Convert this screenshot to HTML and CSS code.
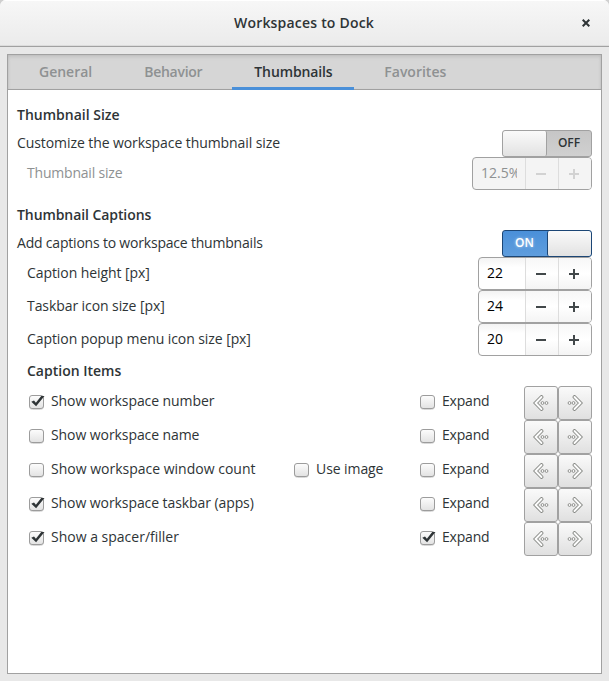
FILE: index.html
```html
<!DOCTYPE html>
<html lang="en">
<head>
<meta charset="utf-8">
<title>Workspaces to Dock</title>
<link rel="stylesheet" href="styles.css">
</head>
<body>
<svg width="0" height="0" class="defs">
  <defs>
    <linearGradient id="box" x1="0" y1="0" x2="0" y2="1"><stop offset="0" stop-color="#fdfdfd"/><stop offset="1" stop-color="#e2e2e2"/></linearGradient>
    <symbol id="check" viewBox="0 0 17 17">
      <rect x="1.500" y="2.500" width="14" height="13" rx="3" fill="none" stroke="#d8d8d8"/>
      <rect x="1.500" y="1.500" width="14" height="13" rx="2.500" fill="url(#box)" stroke="#9c9c9c"/>
    </symbol>
    <symbol id="tick" viewBox="0 0 17 17">
      <path d="M3.300 7.800l2.700-1.200 1.900 2.100L13.200 2h3.300L8.100 12.200z" fill="#2e3436"/>
    </symbol>
    <symbol id="arrow" viewBox="0 0 16 16">
      <path d="M8.500 2L2.600 8l5.900 6" fill="none" stroke="#848682" stroke-width="3.800" stroke-linecap="round"/>
      <path d="M8.500 2L2.600 8l5.900 6" fill="none" stroke="#fcfcfc" stroke-width="2" stroke-linecap="round"/>
      <circle cx="9.500" cy="8" r="1.400" fill="#fff" stroke="#848682" stroke-width=".9"/>
      <circle cx="13.500" cy="8" r="1.400" fill="#fff" stroke="#848682" stroke-width=".9"/>
    </symbol>
    <symbol id="minus" viewBox="0 0 10 10"><path d="M0 5h10" stroke="currentColor" stroke-width="2"/></symbol>
    <symbol id="plus" viewBox="0 0 10 10"><path d="M0 5h10M5 0v10" stroke="currentColor" stroke-width="2"/></symbol>
  </defs>
</svg>
<div class="window">
  <header class="titlebar">
    <h1>Workspaces to Dock</h1>
    <svg class="close" width="8" height="8" viewBox="0 0 8 8"><path d="M.7.7l6.600 6.600M7.300.7L.7 7.300" stroke="#2e3436" stroke-width="2"/></svg>
  </header>
  <main class="notebook">
    <nav class="tabs">
      <div class="tab">General</div>
      <div class="tab behavior">Behavior</div>
      <div class="tab active">Thumbnails</div>
      <div class="tab">Favorites</div>
    </nav>
    <section class="page">
      <h2>Thumbnail Size</h2>
      <div class="row row-switch"><span class="label tight">Customize the workspace thumbnail size</span><div class="switch"><i></i><b>OFF</b></div></div>
      <div class="row row-spin disabled"><span class="label tighter">Thumbnail size</span><div class="spin wide"><span class="value">12.5%</span><span class="step"><svg><use href="#minus"/></svg></span><span class="step"><svg><use href="#plus"/></svg></span></div></div>
      <h2 class="second tight">Thumbnail Captions</h2>
      <div class="row row-switch"><span class="label tighter">Add captions to workspace thumbnails</span><div class="switch on"><b>ON</b><i></i></div></div>
      <div class="row row-spin"><span class="label tight">Caption height [px]</span><div class="spin"><span class="value">22</span><span class="step"><svg><use href="#minus"/></svg></span><span class="step"><svg><use href="#plus"/></svg></span></div></div>
      <div class="row row-spin"><span class="label tight">Taskbar icon size [px]</span><div class="spin"><span class="value">24</span><span class="step"><svg><use href="#minus"/></svg></span><span class="step"><svg><use href="#plus"/></svg></span></div></div>
      <div class="row row-spin"><span class="label tight">Caption popup menu icon size [px]</span><div class="spin"><span class="value">20</span><span class="step"><svg><use href="#minus"/></svg></span><span class="step"><svg><use href="#plus"/></svg></span></div></div>
      <h2 class="sub">Caption Items</h2>
      <div class="item"><div class="option"><svg class="cb"><use href="#check"/><use href="#tick"/></svg><span class="tight">Show workspace number</span></div><div></div><div class="option"><svg class="cb"><use href="#check"/></svg><span class="tighter">Expand</span></div><button><svg><use href="#arrow"/></svg></button><button><svg class="flip"><use href="#arrow"/></svg></button></div>
      <div class="item"><div class="option"><svg class="cb"><use href="#check"/></svg><span class="tight">Show workspace name</span></div><div></div><div class="option"><svg class="cb"><use href="#check"/></svg><span class="tighter">Expand</span></div><button><svg><use href="#arrow"/></svg></button><button><svg class="flip"><use href="#arrow"/></svg></button></div>
      <div class="item"><div class="option"><svg class="cb"><use href="#check"/></svg><span>Show workspace window count</span></div><div class="option"><svg class="cb"><use href="#check"/></svg><span class="tight">Use image</span></div><div class="option"><svg class="cb"><use href="#check"/></svg><span class="tighter">Expand</span></div><button><svg><use href="#arrow"/></svg></button><button><svg class="flip"><use href="#arrow"/></svg></button></div>
      <div class="item"><div class="option"><svg class="cb"><use href="#check"/><use href="#tick"/></svg><span class="tight">Show workspace taskbar (apps)</span></div><div></div><div class="option"><svg class="cb"><use href="#check"/></svg><span class="tighter">Expand</span></div><button><svg><use href="#arrow"/></svg></button><button><svg class="flip"><use href="#arrow"/></svg></button></div>
      <div class="item"><div class="option"><svg class="cb"><use href="#check"/><use href="#tick"/></svg><span>Show a spacer/filler</span></div><div></div><div class="option"><svg class="cb"><use href="#check"/><use href="#tick"/></svg><span class="tighter">Expand</span></div><button><svg><use href="#arrow"/></svg></button><button><svg class="flip"><use href="#arrow"/></svg></button></div>
    </section>
  </main>
</div>
</body>
</html>
```
FILE: styles.css
```css
* { box-sizing: border-box; }
body { margin: 0; background: #cfcfcf; color: #2e3436; font: 14px/20px "Open Sans", "Noto Sans", sans-serif; }
.defs { display: block; position: absolute; }
.window { display: flex; flex-direction: column; height: 681px; background: #e8e8e8; border-radius: 6px 6px 0 0; overflow: hidden; }
.titlebar { display: flex; align-items: center; height: 47px; padding: 0 19px 0 27px; background: linear-gradient(#f7f7f7, #ebebeb); border-bottom: 1px solid #a1a1a1; box-shadow: inset 0 1px #fff, inset 0 -1px #dcdcdc; }
h1, h2 { margin: 0; font-size: 14px; font-weight: 600; }
h1 { flex: 1; text-align: center; letter-spacing: .2px; padding-left: 7px; padding-right: 8px; }
.close { display: block; }
.notebook { flex: 1; margin: 7px; border: 1px solid #a1a1a1; background: #fff; }
.tabs { display: flex; gap: 8px; height: 35px; padding-left: 9px; background: #d6d6d6; border-bottom: 1px solid #a1a1a1; box-shadow: inset 0 3px 4px -2px #b8b8b8, inset 2px 0 3px -2px #bbb, inset -2px 0 3px -2px #bbb; }
.tab { height: 35px; padding: 7px 22px 0; color: #8e9192; font-weight: 600; }
.behavior { letter-spacing: -.28px; }
.tab.active { color: #2e3436; border-bottom: 3px solid #4a90d9; width: 122px; letter-spacing: -.12px; }
.page { padding: 10px 9px; }
h2 { height: 30px; line-height: 30px; }
.second { margin-top: 10px; }
.sub { padding-left: 10px; }
.tight { letter-spacing: -.08px; }
.tighter { letter-spacing: -.2px; }
.row { display: flex; justify-content: space-between; align-items: center; }
.label { padding-bottom: 2px; }
.row-switch { height: 27px; }
.row-spin { height: 33px; padding-left: 10px; }
.switch { display: flex; width: 90px; height: 27px; border: 1px solid #a1a1a1; border-radius: 3px; background: linear-gradient(#c6c6c6, #d0d0d0); overflow: hidden; }
.switch i { width: 44px; border-right: 1px solid #a1a1a1; border-radius: 2px; background: linear-gradient(#fafafa, #e2e2e2); }
.switch b { flex: 1; text-align: center; font-size: 12px; font-weight: 600; line-height: 24px; }
.switch.on { border-color: #1c4675; background: linear-gradient(#4a90d9, #5f9ddd); color: #fff; }
.switch.on i { border-right: 0; border-left: 1px solid #1c4675; }
.switch.on b { padding-right: 1px; text-shadow: 0 0 3px rgba(255, 255, 255, .6); }
.spin { display: flex; width: 114px; height: 33px; border: 1px solid #a1a1a1; border-radius: 4px; background: linear-gradient(#f3f3f3, #fff 30%); color: #000; }
.wide { width: 120px; }
.value { flex: 1; margin-right: 8px; padding-left: 8px; line-height: 30px; overflow: hidden; white-space: nowrap; }
.step { display: flex; align-items: center; justify-content: center; width: 33px; padding-right: 2px; border-left: 1px solid #ddd; color: #42484a; background: linear-gradient(#f7f7f7, #fff 50%, #f4f4f4); }
.step:last-child { border-radius: 0 3px 3px 0; }
.step svg { width: 10px; height: 10px; }
.disabled { color: #8e9192; }
.disabled .spin { color: #8e9192; background: #f4f4f4; }
.disabled .step { color: #d2d2d2; background: #f4f4f4; }
.item { display: grid; grid-template-columns: 265px 126px 106px 34px 34px; height: 34px; padding-left: 10px; }
.option { display: flex; padding-top: 5px; }
.cb { width: 17px; height: 17px; margin: 3px 6px 0 1px; }
button { display: flex; align-items: center; justify-content: center; padding: 0; border: 1px solid #a1a1a1; border-radius: 3px; background: linear-gradient(#fafafa, #e0e0e0); }
button svg { width: 16px; height: 16px; }
.flip { transform: scaleX(-1); }
```
